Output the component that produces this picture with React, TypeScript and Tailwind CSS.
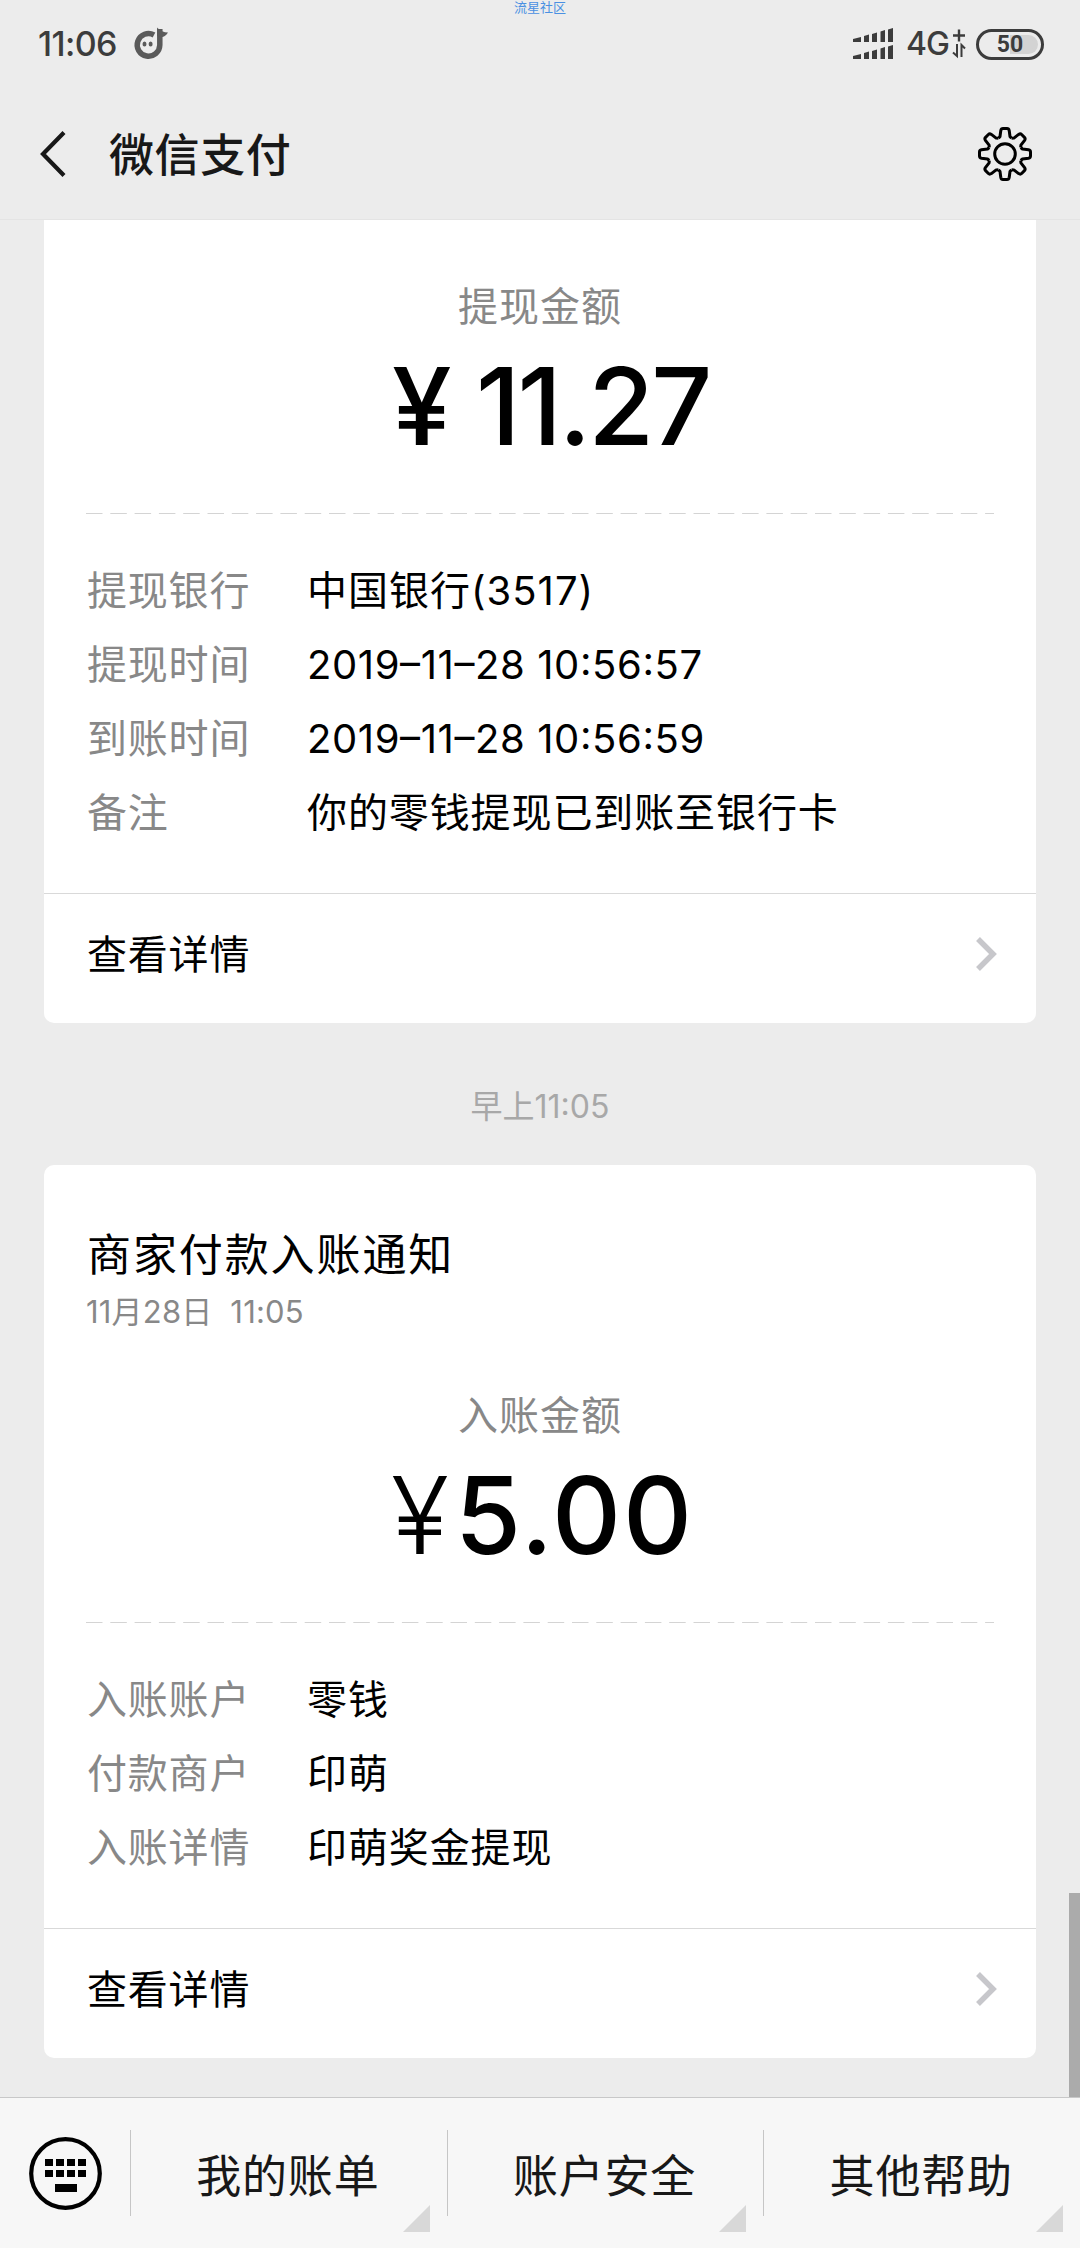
import React from 'react';

const transferRows = [
  { label: '提现银行', value: '中国银行(3517)', spacing: 'tracking-[1px]' },
  { label: '提现时间', value: '2019–11–28 10:56:57', spacing: "tracking-[0.6px] [font-feature-settings:'case']" },
  { label: '到账时间', value: '2019–11–28 10:56:59', spacing: "tracking-[0.6px] [font-feature-settings:'case']" },
  { label: '备注', value: '你的零钱提现已到账至银行卡', spacing: 'tracking-[0.9px]' },
];

const incomeRows = [
  { label: '入账账户', value: '零钱', spacing: 'tracking-[0.9px]' },
  { label: '付款商户', value: '印萌', spacing: 'tracking-[0.9px]' },
  { label: '入账详情', value: '印萌奖金提现', spacing: 'tracking-[0.9px]' },
];

const menuItems = ['我的账单', '账户安全', '其他帮助'];

function StatusBar() {
  return (
    <div className="relative flex h-[88px] items-center justify-between pl-[38px] pr-[36px] text-[#3c3c3c]">
      <span className="absolute left-[514px] top-0 text-[13px] leading-[15px] text-[#4a90e2]">流星社区</span>
      <div className="flex items-center">
        <span className="w-[95px] text-[34px] font-medium leading-[40px] tracking-[-0.6px]">11:06</span>
        <svg className="h-[34px] w-[36px]" viewBox="0 0 36 34">
          <path d="M21 8 A11.300 11.300 0 1 0 26.800 18 V2" fill="none" stroke="#5a5a5a" strokeWidth="5.500" />
          <path d="M24.100 0.500 C27 4 31 5.500 35 5.500 C33.500 8 31.500 9.500 29.500 10 L24.100 9 Z" fill="#5a5a5a" />
          <ellipse cx="11.500" cy="17" rx="2" ry="2.500" fill="#5a5a5a" />
          <ellipse cx="17.600" cy="17" rx="2" ry="2.500" fill="#5a5a5a" />
        </svg>
      </div>
      <div className="flex items-center">
        <svg className="h-[32px] w-[40px]" viewBox="0 0 40 32" fill="#3c3c3c">
          <path d="M0 11 L8 9 V14 H0Z M11 8 L16 6.500 V14 H11Z M19 6 L24 4.500 V14 H19Z M27.500 3.500 L32 2 V14 H27.500Z M35 1.500 L40 0 V14 H35Z" />
          <path d="M0 28 L8 26 V31 H0Z M11 25 L16 23.500 V31 H11Z M19 23 L24 21.500 V31 H19Z M27.500 20.500 L32 19 V31 H27.500Z M35 18.500 L40 17 V31 H35Z" />
        </svg>
        <span className="ml-[13px] w-[46px] text-[32px] font-medium leading-[40px] tracking-[-1px]">4G</span>
        <svg className="h-[30px] w-[14px]" viewBox="0 0 14 30" fill="none" stroke="#3c3c3c" strokeWidth="2.4">
          <path d="M1 6.500 H13 M7 0.500 V12.500" />
          <path d="M5 15 V27 L1 23.500 M9.500 28 V16 L13 19.500" strokeWidth="2" />
        </svg>
        <div className="ml-[10px] flex h-[31px] w-[68px] rounded-full border-[3px] border-[#3c3c3c] p-[3px]">
          <div className="flex w-full items-center justify-center rounded-full bg-gradient-to-r from-transparent from-50% to-[#d3d3d3] to-50% text-[23px] font-bold leading-none">
            <span className="font-[Roboto]">50</span>
          </div>
        </div>
      </div>
    </div>
  );
}

function GearIcon() {
  const teeth = [0, 45, 90, 135, 180, 225, 270, 315];
  return (
    <svg className="size-[56px]" viewBox="-28 -28 56 56" fill="none" stroke="#000" strokeWidth="3" strokeLinejoin="round">
      {teeth.map((angle) => (
        <path
          key={angle}
          transform={`rotate(${angle})`}
          d="M-6.500 -15.700 L-5 -17.500 L-4.200 -23.500 Q-3.800 -25.500 -2 -25.500 H2 Q3.800 -25.500 4.200 -23.500 L5 -17.500 L6.500 -15.700"
        />
      ))}
      <circle r="10.300" />
    </svg>
  );
}

function Header() {
  return (
    <header className="flex h-[132px] items-center border-b border-[#e4e4e4] pl-[40px] pr-[47px]">
      <svg className="h-[46px] w-[28px]" viewBox="0 0 28 46" fill="none" stroke="#181818" strokeWidth="4.200">
        <path d="M24 1.500 L3 23 L24 44.500" />
      </svg>
      <h1 className="ml-[41px] grow pt-[4px] text-[45px] font-medium leading-[60px] tracking-[0.6px] text-[#181818]">微信支付</h1>
      <GearIcon />
    </header>
  );
}

function DashedLine() {
  return (
    <svg className="ml-[42px] block h-px w-[908px]">
      <line x1="0" y1="0.500" x2="908" y2="0.500" stroke="#d4d4d4" strokeWidth="1" strokeDasharray="16.500 7.800" />
    </svg>
  );
}

function Rows({ rows }: { rows: { label: string; value: string; spacing: string }[] }) {
  return (
    <div className="pl-[43px] text-[40px] leading-[74px]">
      {rows.map((row) => (
        <div key={row.label} className="flex h-[74px]">
          <span className="w-[220px] tracking-[0.8px] text-[#888888]">{row.label}</span>
          <span className={row.spacing}>{row.value}</span>
        </div>
      ))}
    </div>
  );
}

function DetailLink() {
  return (
    <div className="flex h-[130px] items-center justify-between border-t border-[#d9d9d9] pb-[9px] pl-[43px] pr-[39px]">
      <span className="pt-[2px] text-[40px] leading-[60px] tracking-[0.8px]">查看详情</span>
      <svg className="h-[36px] w-[22px]" viewBox="0 0 22 36" fill="none" stroke="#c7c7cb" strokeWidth="5.500">
        <path d="M3 3 L18 18 L3 33" />
      </svg>
    </div>
  );
}

export default function App() {
  return (
    <div className="flex h-[2248px] w-[1080px] flex-col overflow-hidden bg-[#ececec] font-[Inter,'Noto_Sans_CJK_SC',sans-serif] text-black">
      <StatusBar />
      <Header />

      <main className="relative h-[1877px] px-[44px]">
        {/* Withdrawal card */}
        <section className="h-[803px] rounded-b-[10px] bg-white">
          <div className="h-[293px] pt-[57px]">
            <p className="text-center text-[40px] leading-[60px] tracking-[1px] text-[#888888]">提现金额</p>
            <div className="mt-[8px] flex pl-[348px] text-[107px] font-[450] leading-[122px]">
              <span className="w-[84px]">¥</span>
              <span className="tracking-[-3px]">11.27</span>
            </div>
          </div>
          <DashedLine />
          <div className="h-[379px] pt-[40px]">
            <Rows rows={transferRows} />
          </div>
          <DetailLink />
        </section>

        <p className="h-[142px] pt-[64px] text-center text-[32px] leading-[40px] text-[#a8a8a8]">早上11:05</p>

        {/* Incoming payment card */}
        <section className="h-[893px] rounded-[10px] bg-white">
          <div className="h-[457px] pt-[60px]">
            <h2 className="pl-[43px] text-[44px] leading-[60px] tracking-[1.9px]">商家付款入账通知</h2>
            <p className="pl-[42px] pt-[2px] text-[31px] leading-[50px] tracking-[0.2px] text-[#888888]">11月28日&nbsp; 11:05</p>
            <p className="mt-[49px] text-center text-[40px] leading-[60px] tracking-[1px] text-[#888888]">入账金额</p>
            <div className="mt-[8px] flex pl-[347px] text-[107px] leading-[122px]">
              <span className="w-[64px] font-light">¥</span>
              <span className="font-[450] tracking-[2px]">5.00</span>
            </div>
          </div>
          <DashedLine />
          <div className="h-[305px] pt-[40px]">
            <Rows rows={incomeRows} />
          </div>
          <DetailLink />
        </section>

        <div className="absolute bottom-0 right-0 h-[204px] w-[11px] bg-[#ababab]" />
      </main>

      <footer className="flex h-[151px] items-center border-t border-[#c8c8c8] bg-[#f7f7f7] text-[#181818]">
        <div className="flex w-[130px] shrink-0 pl-[29px]">
          <svg className="size-[73px]" viewBox="0 0 73 73">
            <circle cx="36.500" cy="36.500" r="34.300" fill="none" stroke="#000" strokeWidth="4.200" />
            <path d="M16 22h8v7h-8z M27 22h8v7h-8z M38 22h8v7h-8z M49 22h8v7h-8z M16 33h8v7h-8z M27 33h8v7h-8z M38 33h8v7h-8z M49 33h8v7h-8z M26 47h22v8h-22z" />
          </svg>
        </div>
        {menuItems.map((item) => (
          <div key={item} className="relative flex h-[86px] flex-1 items-center justify-center border-l border-[#c6c6c6]">
            <span className="pt-[7px] pr-[2px] text-[45px] leading-[60px] tracking-[0.8px]">{item}</span>
            <svg className="absolute -bottom-[16px] right-[17px] size-[27px]" viewBox="0 0 27 27">
              <path d="M27 0 V27 H0Z" fill="#d8d8d8" />
            </svg>
          </div>
        ))}
      </footer>
    </div>
  );
}
